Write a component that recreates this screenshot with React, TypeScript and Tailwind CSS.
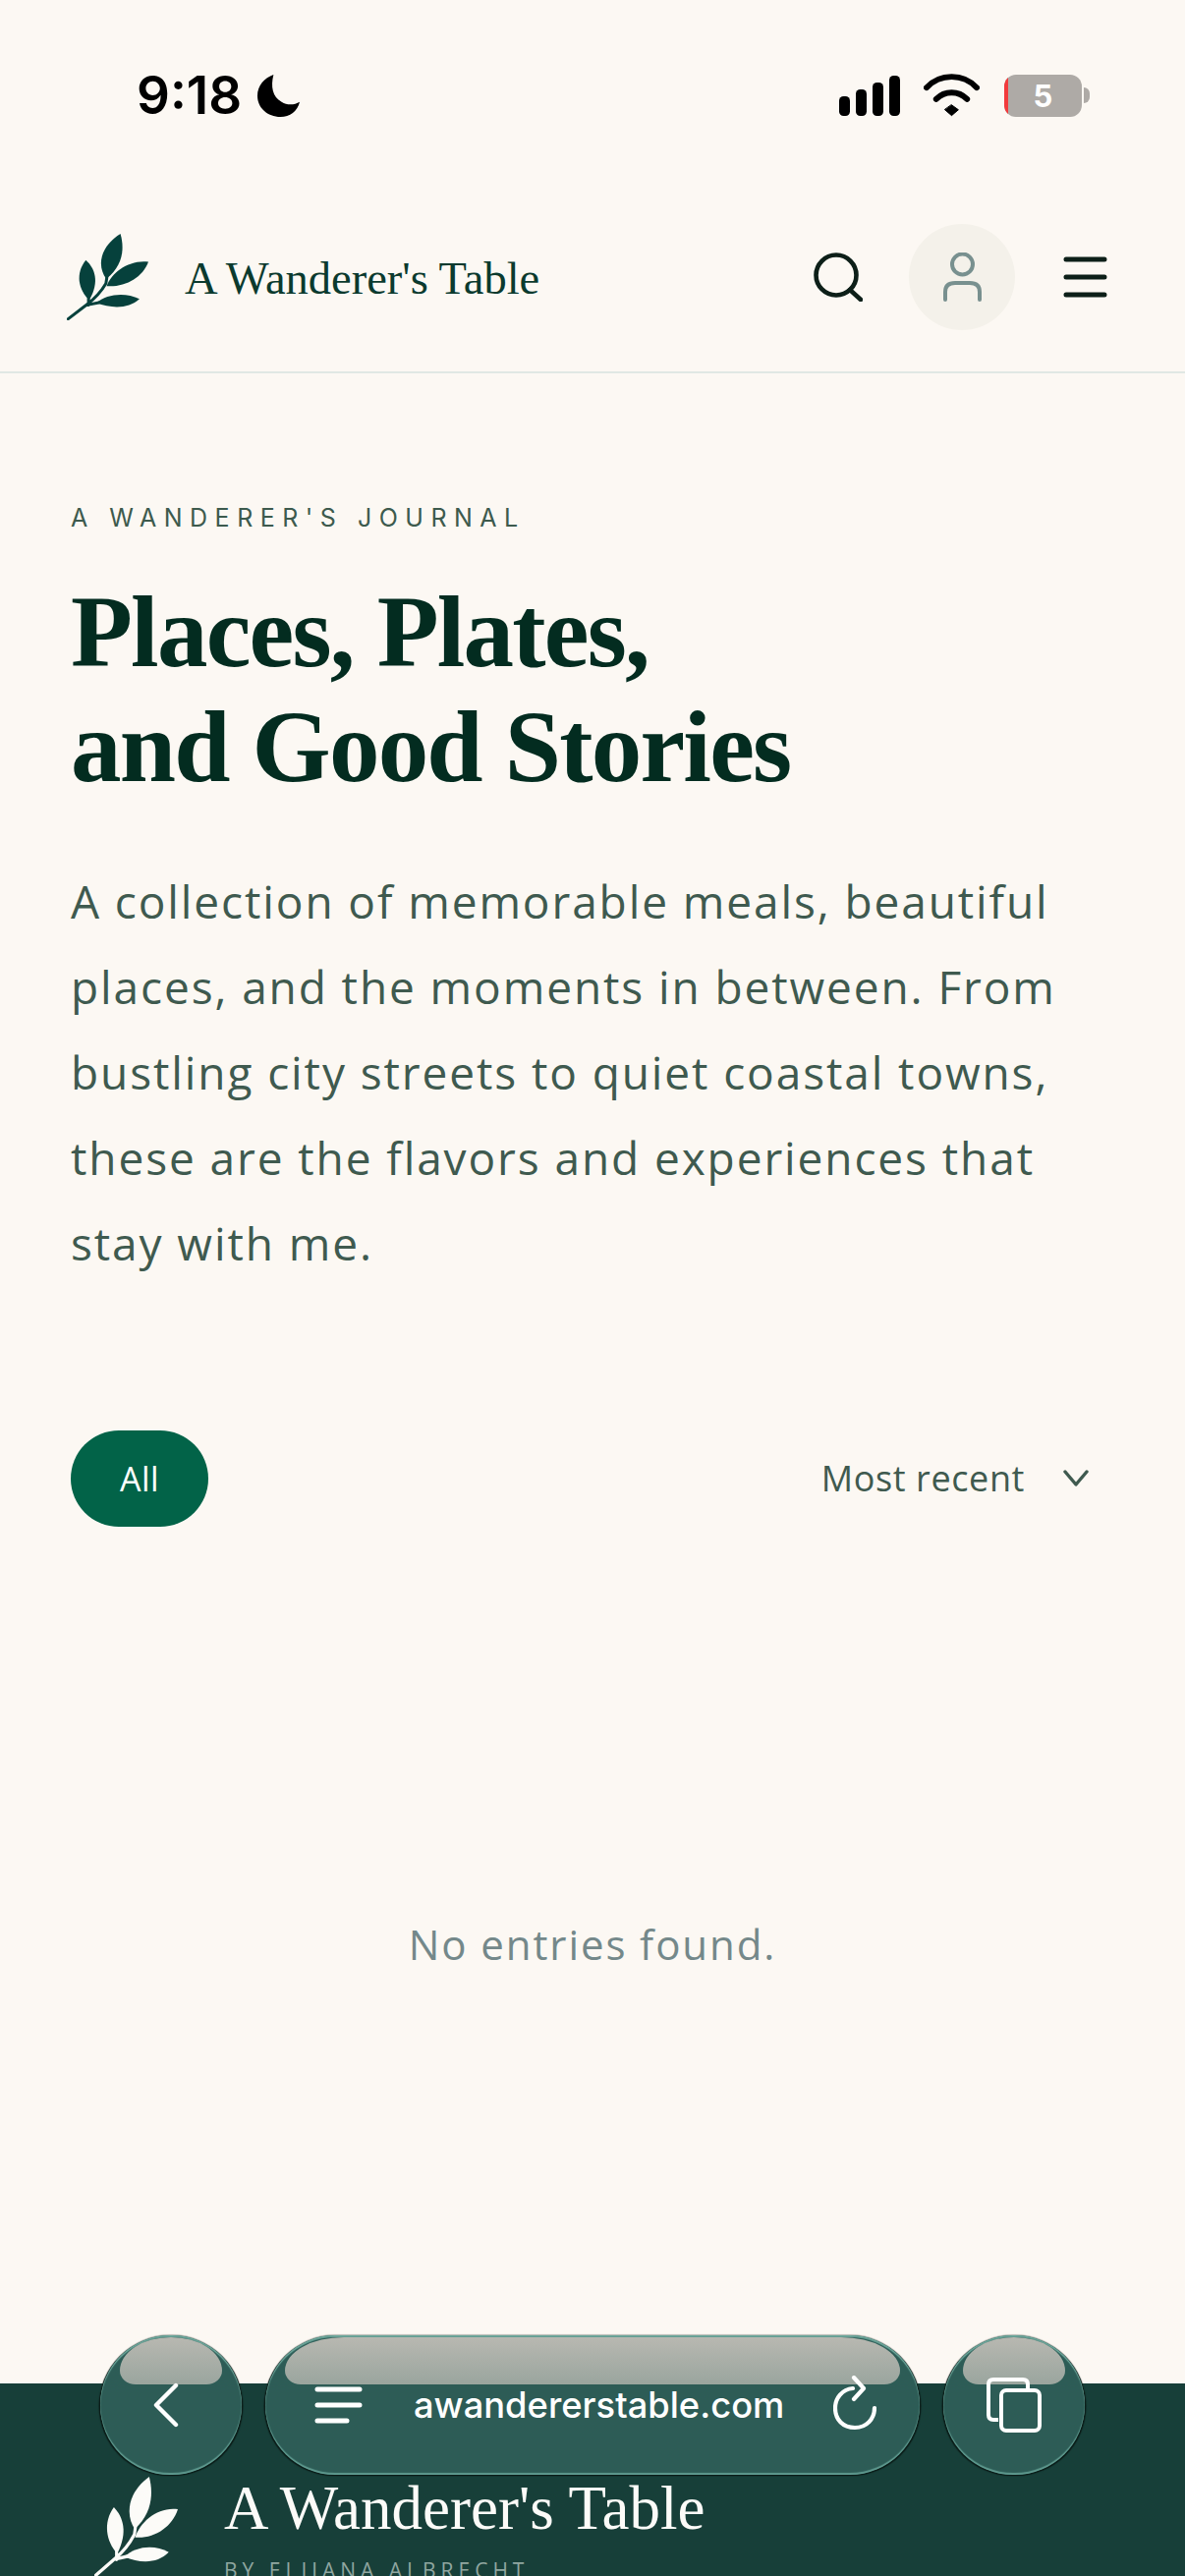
const serif = "font-['Liberation_Serif',serif]";
const body = "font-['Open_Sans','Noto_Sans',sans-serif]";
const inter = "font-['Inter',sans-serif]";

function Leaf({ className, color }: { className: string; color: string }) {
    return (
        <svg viewBox="27 15 248 263" preserveAspectRatio="none" className={className} fill={color}>
            <path d="M190 15C203 60 198 112 147 152C122 120 120 60 190 15Z" />
            <path d="M85 95C112 120 128 160 95 217C62 185 52 135 85 95Z" />
            <path d="M275 100C258 147 205 178 148 174C163 133 215 93 275 100Z" />
            <path d="M248 213C215 243 165 243 116 225C150 197 205 192 248 213Z" />
            <path d="M31 274L88 230C115 210 132 190 146 166L150 140M93 212V232M85 232L125 224" fill="none" stroke={color} strokeWidth="9" strokeLinecap="round" />
        </svg>
    );
}

function StatusBar() {
    return (
        <div className="flex h-[190px] items-start justify-between pl-[139px] pr-[97px] pt-[75px]">
            <div className="flex items-center gap-[16px]">
                <span className={`${inter} text-[53px] leading-[44px] font-semibold text-black`}>9:18</span>
                <svg viewBox="0 0 42 42" className="h-[43px] w-[43px]" fill="#000">
                    <path d="M16 0C13 12 15 22 24 27C30 31 37 30 42 27C40 36 32 42 23 42C10 42 0 33 0 21C0 11 7 3 16 0Z" />
                </svg>
            </div>
            <div className="flex items-center">
                <svg viewBox="0 0 62 42" className="h-[42px] w-[62px]" fill="#000">
                    <rect x="0" y="22" width="11" height="20" rx="4.500" />
                    <rect x="17" y="15" width="11" height="27" rx="4.500" />
                    <rect x="34" y="8" width="11" height="34" rx="4.500" />
                    <rect x="51" y="1" width="11" height="41" rx="4.500" />
                </svg>
                <svg viewBox="0 0 58 44" className="ml-[24px] h-[44px] w-[57px]" fill="none" stroke="#000" strokeWidth="6" strokeLinecap="round">
                    <path d="M3 14C17 -1 41 -1 55 14" />
                    <path d="M13 26C22 17 36 17 45 26" />
                    <path d="M29 32L36 37L29 43L22 37Z" fill="#000" strokeWidth="1" strokeLinejoin="round" />
                </svg>
                <div className="relative ml-[25px] flex h-[43px] w-[79px] items-center justify-center overflow-hidden rounded-[12px] bg-[#aeaaa6]">
                    <div className="absolute inset-y-0 left-0 w-[4px] bg-[#f23a3c]" />
                    <span className={`${inter} text-[31px] leading-none font-bold text-white`}>5</span>
                </div>
                <div className="ml-[2px] h-[16px] w-[6px] rounded-r-full bg-[#aeaaa6]" />
            </div>
        </div>
    );
}

function Header() {
    return (
        <header className="flex h-[190px] items-center border-b-2 border-[#e0e8e4] pl-[68px] pr-[79px] pb-[4px]">
            <Leaf className="h-[88px] w-[83px]" color="#06413c" />
            <span className={`${serif} ml-[37px] mt-[4px] text-[46.500px] leading-none text-[#0b3a2e]`}>A Wanderer's Table</span>
            <div className="ml-auto flex items-center">
                <svg viewBox="0 0 50 50" className="h-[50px] w-[50px]" fill="none" stroke="#0d1f18" strokeWidth="4.600" strokeLinecap="round">
                    <circle cx="23" cy="23" r="20.500" />
                    <path d="M37 38L48 48" />
                </svg>
                <div className="ml-[47px] flex h-[108px] w-[108px] items-center justify-center rounded-full bg-[#f4f1ea]">
                    <svg viewBox="0 0 39 50" className="h-[50px] w-[39px]" fill="none" stroke="#78908f" strokeWidth="4" strokeLinecap="round">
                        <circle cx="19.500" cy="12" r="10.500" />
                        <path d="M2 48V40C2 33 7 31 12 31H27C32 31 37 33 37 40V48" />
                    </svg>
                </div>
                <svg viewBox="0 0 45 42" className="ml-[49px] h-[42px] w-[45px]" fill="none" stroke="#0d1f18" strokeWidth="5" strokeLinecap="round">
                    <path d="M3 3H42M3 21H42M3 39H42" />
                </svg>
            </div>
        </header>
    );
}

function Toolbar() {
    const glass = "relative flex h-[142px] items-center bg-[#2d5c56] shadow-[inset_0_-2px_1px_#5f9a8f,inset_0_2px_1px_#6da79b,-1.500px_1px_1px_#0b1d19,1.500px_1px_1px_#0b1d19,0_-1px_1px_#b5b8b2]";
    const shine = "absolute inset-x-[20px] top-[2px] h-[48px] bg-gradient-to-b from-[#b8b8b1] to-[#9aa59e]";
    return (
        <div className="absolute left-[102px] top-[2377px] flex w-[1002px] gap-[24px]">
            <div className={`${glass} w-[144px] shrink-0 justify-center rounded-full`}>
                <div className={`${shine} rounded-[52px_52px_16px_16px/34px_34px_14px_14px]`} />
                <svg viewBox="0 0 26 46" className="relative mr-[10px] h-[46px] w-[26px]" fill="none" stroke="#fff" strokeWidth="4.400" strokeLinecap="round" strokeLinejoin="round">
                    <path d="M23 3L3 23L23 43" />
                </svg>
            </div>
            <div className={`${glass} flex-1 rounded-full`}>
                <div className={`${shine} rounded-[60px_60px_16px_16px/34px_34px_14px_14px]`} />
                <svg viewBox="0 0 49 38" className="relative ml-[50px] h-[38px] w-[49px]" fill="none" stroke="#fff" strokeWidth="5" strokeLinecap="round">
                    <path d="M3 3H46M3 19H46M3 35H33" />
                </svg>
                <span className={`${inter} relative ml-[52px] text-[36.300px] leading-none font-medium text-white`}>awandererstable.com</span>
                <svg viewBox="0 0 44 56" className="relative ml-auto mr-[44px] mb-[4px] h-[56px] w-[44px]" fill="none" stroke="#fff" strokeWidth="4.200" strokeLinecap="round" strokeLinejoin="round">
                    <path d="M20 13C9 14 2 23 2 33C2 45 10 53 22 53C34 53 42 44 42 33" />
                    <path d="M21 2L31 13L21 24" />
                </svg>
            </div>
            <div className={`${glass} w-[144px] shrink-0 justify-center rounded-full`}>
                <div className={`${shine} rounded-[52px_52px_16px_16px/34px_34px_14px_14px]`} />
                <svg viewBox="0 0 56 56" className="relative h-[56px] w-[56px]" fill="none" stroke="#fff" strokeWidth="4">
                    <path d="M12 43H7C3.500 43 2 41.500 2 38V7C2 3.500 3.500 2 7 2H37C40.500 2 42 3.500 42 7V13" />
                    <rect x="15" y="13" width="39" height="41" rx="5" />
                </svg>
            </div>
        </div>
    );
}

export default function App() {
    return (
        <div className={`${body} relative flex h-[2622px] w-[1206px] flex-col overflow-hidden bg-[#fcf8f3]`}>
            <StatusBar />
            <Header />
            <main className="flex-1 px-[72px] pt-[132px]">
                <p className={`${inter} text-[25px] leading-[30px] tracking-[7.500px] text-[#3d5a4d]`}>A WANDERER'S JOURNAL</p>
                <h1 className={`${serif} mt-[43px] text-[103px] leading-[117px] font-bold tracking-[-1.800px] text-[#032c20]`}>
                    Places, Plates,
                    <br />
                    and Good Stories
                </h1>
                <p className="mt-[55px] w-[1062px] text-[46px] leading-[87px] tracking-[1.900px] text-[#3f5a4f]">
                    A collection of memorable meals, beautiful places, and the moments in between. From bustling city streets to quiet coastal towns, these are the flavors and experiences that stay with me.
                </p>
                <div className="mt-[147px] flex items-center justify-between">
                    <div className="flex h-[98px] w-[140px] items-center justify-center rounded-full bg-[#026348] text-[34px] tracking-[0.500px] text-white">All</div>
                    <div className="flex items-center pr-[26px] text-[36px] tracking-[0.600px] text-[#3f5a4f]">
                        Most recent
                        <svg viewBox="0 0 26 18" className="ml-[39px] h-[18px] w-[26px]" fill="none" stroke="#3f5a4f" strokeWidth="3.400" strokeLinecap="round" strokeLinejoin="round">
                            <path d="M2 2L13 15L24 2" />
                        </svg>
                    </div>
                </div>
                <p className="mt-[396px] text-center text-[42px] leading-[58px] tracking-[1.900px] text-[#74888a]">No entries found.</p>
            </main>
            <footer className="flex h-[196px] shrink-0 bg-[#173f39] pl-[96px] pt-[95px]">
                <Leaf className="h-[102px] w-[85px] shrink-0" color="#fcfbf8" />
                <div className="ml-[47px]">
                    <p className={`${serif} text-[63px] leading-[64px] whitespace-nowrap text-[#fcfbf8]`}>A Wanderer's Table</p>
                    <p className="mt-[18px] text-[21px] leading-[26px] tracking-[5.000px] whitespace-nowrap text-[#8fa6a0]">BY ELIJANA ALBRECHT</p>
                </div>
            </footer>
            <Toolbar />
        </div>
    );
}
